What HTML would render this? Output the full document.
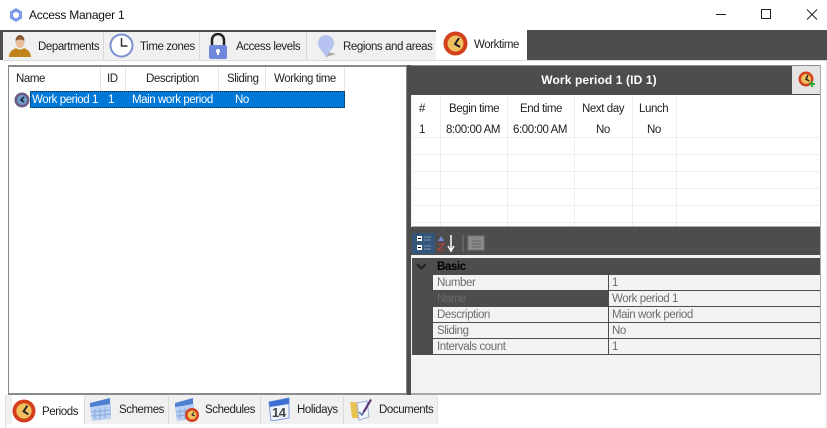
<!DOCTYPE html>
<html><head><meta charset="utf-8"><style>
html,body{margin:0;padding:0;background:#fff}
#r{position:relative;width:827px;height:428px;overflow:hidden;background:#fff;font:11.5px/14px "Liberation Sans",sans-serif;letter-spacing:-.42px;color:#222}
#r div,#r svg{position:absolute}
.t{white-space:nowrap}
.c{text-align:center}
.g{color:#6d6d6d}
</style></head><body><div id="r">
<svg style="left:8px;top:7px" width="16" height="16" viewBox="0 0 16 16"><path d="M8 1l6 3.500v7L8 15l-6-3.500v-7z" fill="#7d9be8"/><circle cx="8" cy="8" r="3" fill="#fff"/></svg>
<div class="t" style="left:29px;top:8px;font-size:12px;letter-spacing:-.25px;color:#111">Access Manager 1</div>
<svg style="left:700px;top:0" width="127" height="30" fill="none" stroke="#222"><path d="M16 14.500h10M61.500 9.500h9v9h-9zM107 9.500l10 10M117 9.500l-10 10"/></svg>

<div style="left:0;top:30px;width:827px;height:30px;background:#4d4d4d"></div>
<div style="left:3px;top:32px;width:433px;height:28px;background:#f0f0f0"></div>
<div style="left:103px;top:32px;width:1px;height:28px;background:#d9d9d9"></div>
<div style="left:199px;top:32px;width:1px;height:28px;background:#d9d9d9"></div>
<div style="left:306px;top:32px;width:1px;height:28px;background:#d9d9d9"></div>
<div style="left:436px;top:30px;width:91px;height:31px;background:#fff"></div>
<div style="left:3px;top:60px;width:824px;height:1px;background:#dcdcdc"></div>
<div class="t" style="left:38px;top:40px">Departments</div>
<div class="t" style="left:140px;top:40px">Time zones</div>
<div class="t" style="left:236px;top:40px">Access levels</div>
<div class="t" style="left:343px;top:40px">Regions and areas</div>
<div class="t" style="left:474px;top:38px">Worktime</div>
<svg style="left:9px;top:34px" width="22" height="24" viewBox="0 0 22 24"><ellipse cx="11" cy="8" rx="4.500" ry="6" fill="#e8c0a0"/><path d="M6.500 7c0-8 9-8 9 0-3-2-6-2-9 0z" fill="#8a5a2e"/><path d="M0 23c0-6 5-8 7-9 2 2 6 2 8 0 2 1 7 3 7 9z" fill="#c0841c"/></svg>
<svg style="left:109px;top:33px" width="25" height="25" viewBox="0 0 25 25"><circle cx="12.500" cy="12.500" r="11" fill="#fff" stroke="#7d8fcf" stroke-width="2"/><path d="M12.500 5v8h6" fill="none" stroke="#333" stroke-width="1.500"/></svg>
<svg style="left:208px;top:33px" width="20" height="26" viewBox="0 0 20 26"><path d="M4 12V7a6 6 0 0 1 12 0v5" fill="none" stroke="#222" stroke-width="2.500"/><rect x="1" y="12" width="18" height="14" rx="2" fill="#6f87dc"/><circle cx="10" cy="18" r="2" fill="#fff"/><rect x="9" y="18" width="2" height="4" fill="#fff"/></svg>
<svg style="left:316px;top:35px" width="22" height="24" viewBox="0 0 22 24"><path d="M10 22l10-3-8-2z" fill="#aaa"/><path d="M10 23C8 17 2 14 2 8a8 8 0 0 1 16 0c0 6-6 9-8 15z" fill="#b6c3f0"/></svg>
<svg style="left:443px;top:31px" width="25" height="25" viewBox="0 0 25 25"><circle cx="12.500" cy="12.500" r="12" fill="#d2401c"/><circle cx="12.500" cy="12.500" r="8" fill="#f0c060"/><path d="M16 7l-4 6 5 3" fill="none" stroke="#222" stroke-width="2"/></svg>

<div style="left:8px;top:65px;width:399px;height:330px;background:#fff;border:1px solid #8a8a8a;border-top-width:2px;border-bottom-width:2px;box-sizing:border-box"></div>
<div style="left:100px;top:67px;width:1px;height:24px;background:#e5e5e5"></div>
<div style="left:125px;top:67px;width:1px;height:24px;background:#e5e5e5"></div>
<div style="left:218px;top:67px;width:1px;height:24px;background:#e5e5e5"></div>
<div style="left:265px;top:67px;width:1px;height:24px;background:#e5e5e5"></div>
<div style="left:344px;top:67px;width:1px;height:24px;background:#e5e5e5"></div>
<div class="t" style="left:16px;top:72px">Name</div>
<div class="t" style="left:107px;top:72px">ID</div>
<div class="t" style="left:146px;top:72px">Description</div>
<div class="t" style="left:227px;top:72px">Sliding</div>
<div class="t" style="left:274px;top:72px">Working time</div>
<div style="left:30px;top:91px;width:315px;height:17px;background:#0078d7;border:1px dotted #123;box-sizing:border-box"></div>
<svg style="left:14px;top:92px" width="16" height="16" viewBox="0 0 16 16"><circle cx="8" cy="8" r="7.500" fill="#6b5a86"/><circle cx="8" cy="8" r="5" fill="#6f9bc8"/><path d="M10 5L7 8l3 2" fill="none" stroke="#123" stroke-width="1.500"/></svg>
<div class="t" style="left:32px;top:93px;color:#fff">Work period 1</div>
<div class="t" style="left:108px;top:93px;color:#fff">1</div>
<div class="t" style="left:132px;top:93px;color:#fff">Main work period</div>
<div class="t" style="left:235px;top:93px;color:#fff">No</div>

<div style="left:407px;top:65px;width:4px;height:330px;background:#4d4d4d"></div>
<div style="left:411px;top:65px;width:410px;height:330px;background:#f3f3f3;border-right:1px solid #a8a8a8;box-sizing:border-box"></div>
<div style="left:411px;top:65px;width:409px;height:2px;background:#8c8c8c"></div>
<div style="left:411px;top:66px;width:409px;height:29px;background:#4d4d4d"></div>
<div class="t c" style="left:411px;top:73px;width:376px;color:#fff;font-weight:bold;font-size:12px;letter-spacing:.12px">Work period 1 (ID 1)</div>
<div style="left:792px;top:66px;width:28px;height:28px;background:#e4e4e4"></div>
<svg style="left:798px;top:71px" width="18" height="18" viewBox="0 0 18 18"><circle cx="8" cy="8" r="7.500" fill="#d2401c"/><circle cx="8" cy="8" r="5" fill="#f0c060"/><path d="M10 4L8 8l3 2" fill="none" stroke="#222" stroke-width="1.500"/><path d="M11 12h2v-2h2v2h2v2h-2v2h-2v-2h-2z" fill="#38a838"/></svg>

<div style="left:412px;top:95px;width:408px;height:131px;background:#fff"></div>
<div style="left:412px;top:226px;width:408px;height:1px;background:#aaa"></div>
<div style="left:412px;top:137px;width:408px;height:1px;background:#eee"></div>
<div style="left:412px;top:154px;width:408px;height:1px;background:#eee"></div>
<div style="left:412px;top:171px;width:408px;height:1px;background:#eee"></div>
<div style="left:412px;top:188px;width:408px;height:1px;background:#eee"></div>
<div style="left:412px;top:205px;width:408px;height:1px;background:#eee"></div>
<div style="left:412px;top:222px;width:408px;height:1px;background:#eee"></div>
<div style="left:440px;top:96px;width:1px;height:130px;background:#eee"></div>
<div style="left:507px;top:96px;width:1px;height:130px;background:#eee"></div>
<div style="left:574px;top:96px;width:1px;height:130px;background:#eee"></div>
<div style="left:632px;top:96px;width:1px;height:130px;background:#eee"></div>
<div style="left:676px;top:96px;width:1px;height:130px;background:#eee"></div>
<div class="t" style="left:419px;top:102px">#</div>
<div class="t" style="left:449px;top:102px">Begin time</div>
<div class="t" style="left:520px;top:102px">End time</div>
<div class="t" style="left:582px;top:102px">Next day</div>
<div class="t" style="left:639px;top:102px">Lunch</div>
<div class="t" style="left:419px;top:123px">1</div>
<div class="t" style="left:446px;top:123px">8:00:00 AM</div>
<div class="t" style="left:513px;top:123px">6:00:00 AM</div>
<div class="t" style="left:596px;top:123px">No</div>
<div class="t" style="left:647px;top:123px">No</div>

<div style="left:411px;top:227px;width:409px;height:29px;background:#4d4d4d"></div>
<div style="left:412px;top:233px;width:23px;height:21px;background:#33567a"></div>
<svg style="left:412px;top:233px" width="76" height="21" viewBox="0 0 76 21"><rect x="5" y="3" width="5" height="5" fill="#fff"/><rect x="5" y="12" width="5" height="5" fill="#fff"/><path d="M6 5.500h3M6 14.500h3" stroke="#000"/><path d="M12 4h7M12 7h7M12 13h7M12 16h7" stroke="#7f97ad"/><path d="M29 3l-3 5h6z" fill="#6f8ad8"/><path d="M26 11h6l-6 6h6" stroke="#c04040" fill="none"/><path d="M39 2v14M36 13l3 5 3-5" stroke="#fff" fill="none" stroke-width="1.500"/><path d="M51 2v17" stroke="#777"/><rect x="56" y="3" width="16" height="14" fill="#8a8a8a" stroke="#777"/><path d="M60 8h9M60 11h9M60 14h9" stroke="#666"/></svg>
<div style="left:411px;top:255px;width:409px;height:2px;background:#f3f3f3"></div>
<div style="left:412px;top:258px;width:408px;height:97px;background:#4d4d4d"></div>
<div style="left:412px;top:355px;width:408px;height:39px;background:#f3f3f3"></div>
<svg style="left:416px;top:263px" width="11" height="8"><path d="M1 1l4.500 4.500L10 1" fill="none" stroke="#222" stroke-width="2"/></svg>
<div class="t" style="left:437px;top:260px;font-weight:bold;color:#000">Basic</div>

<div style="left:433px;top:275px;width:175px;height:15px;background:#f3f3f3"></div>
<div style="left:609px;top:275px;width:211px;height:15px;background:#f3f3f3"></div>
<div style="left:609px;top:291px;width:211px;height:15px;background:#f3f3f3"></div>
<div style="left:433px;top:307px;width:175px;height:15px;background:#f3f3f3"></div>
<div style="left:609px;top:307px;width:211px;height:15px;background:#f3f3f3"></div>
<div style="left:433px;top:323px;width:175px;height:15px;background:#f3f3f3"></div>
<div style="left:609px;top:323px;width:211px;height:15px;background:#f3f3f3"></div>
<div style="left:433px;top:339px;width:175px;height:15px;background:#f3f3f3"></div>
<div style="left:609px;top:339px;width:211px;height:15px;background:#f3f3f3"></div>
<div class="t g" style="left:437px;top:276px">Number</div>
<div class="t" style="left:437px;top:292px;color:#6a6a6a">Name</div>
<div class="t g" style="left:437px;top:308px">Description</div>
<div class="t g" style="left:437px;top:324px">Sliding</div>
<div class="t g" style="left:437px;top:340px">Intervals count</div>
<div class="t g" style="left:612px;top:276px">1</div>
<div class="t g" style="left:612px;top:292px">Work period 1</div>
<div class="t g" style="left:612px;top:308px">Main work period</div>
<div class="t g" style="left:612px;top:324px">No</div>
<div class="t g" style="left:612px;top:340px">1</div>
<div style="left:411px;top:393px;width:410px;height:2px;background:#a8a8a8"></div>

<div style="left:5px;top:395px;width:432px;height:29px;background:#f0f0f0"></div>
<div style="left:5px;top:395px;width:1px;height:33px;background:#ddd"></div>
<div style="left:12px;top:395px;width:72px;height:33px;background:#fff"></div>
<div style="left:168px;top:396px;width:1px;height:28px;background:#d9d9d9"></div>
<div style="left:260px;top:396px;width:1px;height:28px;background:#d9d9d9"></div>
<div style="left:343px;top:396px;width:1px;height:28px;background:#d9d9d9"></div>
<div style="left:84px;top:396px;width:1px;height:28px;background:#d9d9d9"></div>
<div style="left:437px;top:396px;width:1px;height:28px;background:#e3e3e3"></div>
<div class="t" style="left:42px;top:405px">Periods</div>
<div class="t" style="left:119px;top:403px">Schemes</div>
<div class="t" style="left:205px;top:403px">Schedules</div>
<div class="t" style="left:297px;top:403px">Holidays</div>
<div class="t" style="left:379px;top:403px">Documents</div>
<svg style="left:12px;top:399px" width="24" height="24" viewBox="0 0 25 25"><circle cx="12.500" cy="12.500" r="12" fill="#d2401c"/><circle cx="12.500" cy="12.500" r="8" fill="#f0c060"/><path d="M16 7l-4 6 5 3" fill="none" stroke="#222" stroke-width="2"/></svg>
<svg style="left:90px;top:397px" width="22" height="24" viewBox="0 0 22 24"><path d="M0 6l20-5v6L0 11z" fill="#4f7fd0"/><path d="M0 10l21-3v15L2 24z" fill="#b9d0f2"/><path d="M5 12v10M10 11v11M15 10v11M1 15l20-2M1 19l20-2" stroke="#8aa8dc"/></svg>
<svg style="left:175px;top:397px" width="24" height="26" viewBox="0 0 24 26"><path d="M0 6l18-5v6L0 11z" fill="#4f7fd0"/><path d="M0 10l19-3v15L2 24z" fill="#b9d0f2"/><path d="M5 12v10M10 11v11M1 15l18-2M1 19l18-2" stroke="#8aa8dc"/><circle cx="17" cy="18" r="7" fill="#d2401c"/><circle cx="17" cy="18" r="4.500" fill="#f0c060"/><path d="M19 15l-2 3 3 1" fill="none" stroke="#222"/></svg>
<svg style="left:268px;top:397px" width="22" height="24" viewBox="0 0 22 24"><path d="M1 5l20-4 0 20-18 3z" fill="#eef3fb" stroke="#7d9be0"/><path d="M1 5l20-4v6L2 10z" fill="#3f6fd0"/></svg>
<div class="t" style="left:272px;top:406px;font-weight:bold;font-size:13px;color:#444">14</div>
<svg style="left:349px;top:397px" width="24" height="25" viewBox="0 0 24 25"><path d="M1 5h6l2 2h5v14H3z" fill="#e8c14f"/><path d="M8 6l10-2 2 16-10 3z" fill="#f3f6fb" stroke="#9db0d8"/><path d="M10 15l3 3 6-10" fill="none" stroke="#5577bb" stroke-width="1.500"/><path d="M14 14l7-12 2 1-7 12-3 2z" fill="#5b3a78"/></svg>
<div style="left:826px;top:61px;width:1px;height:367px;background:#e6e6e6"></div>
</div></body></html>
